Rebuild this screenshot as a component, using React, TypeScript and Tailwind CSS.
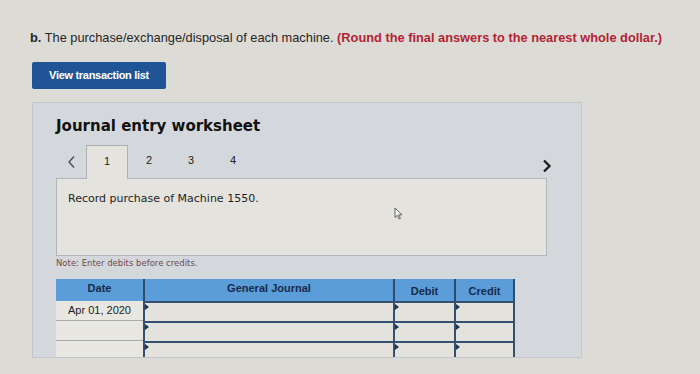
export default function App() {
  const rows = [
    { date: "Apr 01, 2020" },
    { date: "" },
    { date: "" },
  ];
  const Tri = () => (
    <span className="absolute left-0 top-[1px] h-0 w-0 border-y-[3px] border-y-transparent border-l-[4px] border-l-[#1d3654]" />
  );
  return (
    <div className="relative w-[700px] h-[374px] overflow-hidden bg-[#dddbd5] font-['Liberation_Sans',Arial,sans-serif]">
      <div className="pl-[30px] pt-[30px] text-[12.8px] leading-[16px] text-[#262626] whitespace-nowrap">
        <span className="font-bold">b.</span> The purchase/exchange/disposal of each machine.{" "}
        <span className="font-bold text-[#b32334]">(Round the final answers to the nearest whole dollar.)</span>
      </div>

      <div className="ml-[32px] mt-[16px] flex h-[27px] w-[134px] items-center justify-center rounded-[2px] bg-[#1f5597] text-[11px] font-bold tracking-[-0.3px] text-white">
        View transaction list
      </div>

      <div className="ml-[32px] mt-[13px] h-[256px] w-[550px] overflow-hidden border border-[#c3c6ca] bg-[#d4d8dc] pl-[23px]">
        <div className="pt-[13px] h-[33px] font-['DejaVu_Sans',Verdana,sans-serif] text-[15px] leading-[20px] font-bold text-[#111]">
          Journal entry worksheet
        </div>

        <div className="mt-[9px] flex h-[33px] w-[491px] items-stretch">
          <div className="flex w-[30px] items-center justify-center">
            <svg width="9" height="14" viewBox="0 0 9 14">
              <polyline points="7,1.5 2,7 7,12.5" fill="none" stroke="#4a4d52" strokeWidth="1.4" />
            </svg>
          </div>
          <div className="relative z-10 -mb-px flex w-[42px] items-center justify-center border border-b-0 border-[#aeb2b6] bg-[#e4e3de] pb-[2px] text-[11px] text-[#222]">
            1
          </div>
          {["2", "3", "4"].map((t) => (
            <div key={t} className="flex w-[42px] items-center justify-center pb-[2px] text-[11px] text-[#222]">
              {t}
            </div>
          ))}
          <div className="flex flex-1 items-center justify-end pt-[8px]">
            <svg width="10" height="14" viewBox="0 0 10 14" className="mr-[-5px]">
              <polyline points="2,1.5 7.5,7 2,12.5" fill="none" stroke="#1c1c1c" strokeWidth="2.3" />
            </svg>
          </div>
        </div>

        <div className="h-[78px] w-[491px] border border-[#b2b5b9] bg-[#e4e3de] pl-[11px] pt-[12px] font-['DejaVu_Sans',Verdana,sans-serif] text-[11px] leading-[16px] text-[#1e1e1e]">
          Record purchase of Machine 1550.
        </div>

        <div className="mt-[1px] font-['DejaVu_Sans',Verdana,sans-serif] text-[8.5px] leading-[12px] text-[#6e4b4b]">
          Note: Enter debits before credits.
        </div>

        <div className="mt-[10px] w-[459px]">
          <div className="grid h-[22px] grid-cols-[87px_250px_61px_61px] bg-[#5b9dd8] text-[11px] font-bold text-[#182b4a]">
            <div className="flex items-center justify-center pb-[3px]">Date</div>
            <div className="flex items-center justify-center border-l-2 border-[#2e4b6d] pb-[3px]">General Journal</div>
            <div className="flex items-center justify-center border-l-2 border-[#2e4b6d] pt-[3px]">Debit</div>
            <div className="flex items-center justify-center border-l-2 border-r-2 border-[#2e4b6d] pt-[3px]">Credit</div>
          </div>
          {rows.map((r, i) => (
            <div key={i} className="grid h-[20px] grid-cols-[87px_250px_61px_61px]">
              <div className="flex items-center justify-center border-b border-[#a9abae] bg-[#e8e7e2] text-[11px] text-[#222]">
                {r.date}
              </div>
              <div className="relative border-l-2 border-t-2 border-[#33506f] bg-[#e3e2dd]">
                <Tri />
              </div>
              <div className="relative border-l-2 border-t-2 border-[#33506f] bg-[#e3e2dd]">
                <Tri />
              </div>
              <div className="relative border-x-2 border-t-2 border-[#33506f] bg-[#e3e2dd]">
                <Tri />
              </div>
            </div>
          ))}
        </div>
      </div>

      <svg className="absolute left-[394px] top-[207px]" width="9" height="13" viewBox="0 0 9 13">
        <path d="M1 1 L1 10.5 L3.3 8.4 L5 12 L6.4 11.3 L4.8 7.8 L8 7.8 Z" fill="#f4f4f4" stroke="#555" strokeWidth="0.9" strokeLinejoin="round" />
      </svg>
    </div>
  );
}
